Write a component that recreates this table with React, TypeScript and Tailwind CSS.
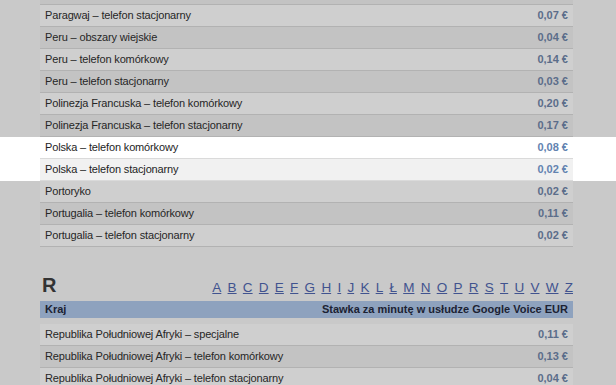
const rowsP = [
  { name: "Paragwaj – telefon stacjonarny", price: "0,07 €" },
  { name: "Peru – obszary wiejskie", price: "0,04 €" },
  { name: "Peru – telefon komórkowy", price: "0,14 €" },
  { name: "Peru – telefon stacjonarny", price: "0,03 €" },
  { name: "Polinezja Francuska – telefon komórkowy", price: "0,20 €" },
  { name: "Polinezja Francuska – telefon stacjonarny", price: "0,17 €" },
  { name: "Polska – telefon komórkowy", price: "0,08 €", active: true },
  { name: "Polska – telefon stacjonarny", price: "0,02 €", active: true },
  { name: "Portoryko", price: "0,02 €" },
  { name: "Portugalia – telefon komórkowy", price: "0,11 €" },
  { name: "Portugalia – telefon stacjonarny", price: "0,02 €" },
];

const rowsR = [
  { name: "Republika Południowej Afryki – specjalne", price: "0,11 €" },
  { name: "Republika Południowej Afryki – telefon komórkowy", price: "0,13 €" },
  { name: "Republika Południowej Afryki – telefon stacjonarny", price: "0,04 €" },
];

const letters = ["A", "B", "C", "D", "E", "F", "G", "H", "I", "J", "K", "L", "Ł", "M", "N", "O", "P", "R", "S", "T", "U", "V", "W", "Z"];

function RateRow({ name, price, odd, active }: { name: string; price: string; odd: boolean; active?: boolean }) {
  // highlighted rows sit outside the dimmed overlay
  const outer = active ? "bg-white" : "bg-[#c9c9c9]";
  const cell = active
    ? odd
      ? "bg-[#f1f1f1] border-[#dadada]"
      : "bg-white border-[#dadada]"
    : odd
      ? "bg-[#c3c3c3] border-[#b2b2b2]"
      : "bg-[#cfcfcf] border-[#b2b2b2]";
  return (
    <div className={`flex pl-[40px] pr-[43px] ${outer}`}>
      <div className={`flex h-[22px] flex-1 items-center justify-between border-b px-[5px] ${cell}`}>
        <span className={`tracking-[-0.15px] ${active ? "text-[#1e1e1e]" : "text-[#262626]"}`}>{name}</span>
        <span className={`font-bold ${active ? "text-[#6383b0]" : "text-[#5b6d8a]"}`}>{price}</span>
      </div>
    </div>
  );
}

export default function App() {
  return (
    <div className="h-[385px] w-[616px] overflow-hidden bg-[#c9c9c9] font-['Liberation_Sans',Arial,sans-serif] text-[11px]">
      <div className="flex pl-[40px] pr-[43px]">
        <div className="h-[5px] flex-1 border-b border-[#b2b2b2] bg-[#c3c3c3]" />
      </div>
      {rowsP.map((r, i) => (
        <RateRow key={r.name} name={r.name} price={r.price} odd={i % 2 === 1} active={r.active} />
      ))}

      <div className="mt-[28px] flex items-end justify-between pl-[42px] pr-[43px]">
        <h2 className="text-[20px] font-bold leading-none text-[#333]">R</h2>
        <div className="mb-[1px] flex gap-[6.25px] text-[13.5px] leading-none text-[#41538f]">
          {letters.map((l) => (
            <a key={l} className="underline">{l}</a>
          ))}
        </div>
      </div>

      <div className="mt-[6px] flex pl-[40px] pr-[43px]">
        <div className="flex h-[17px] flex-1 items-center justify-between bg-[#8ea2be] px-[5px] font-bold text-[#1c2233]">
          <span>Kraj</span>
          <span>Stawka za minutę w usłudze Google Voice EUR</span>
        </div>
      </div>
      <div className="h-[6px]" />
      {rowsR.map((r, i) => (
        <RateRow key={r.name} name={r.name} price={r.price} odd={i % 2 === 1} />
      ))}
    </div>
  );
}
